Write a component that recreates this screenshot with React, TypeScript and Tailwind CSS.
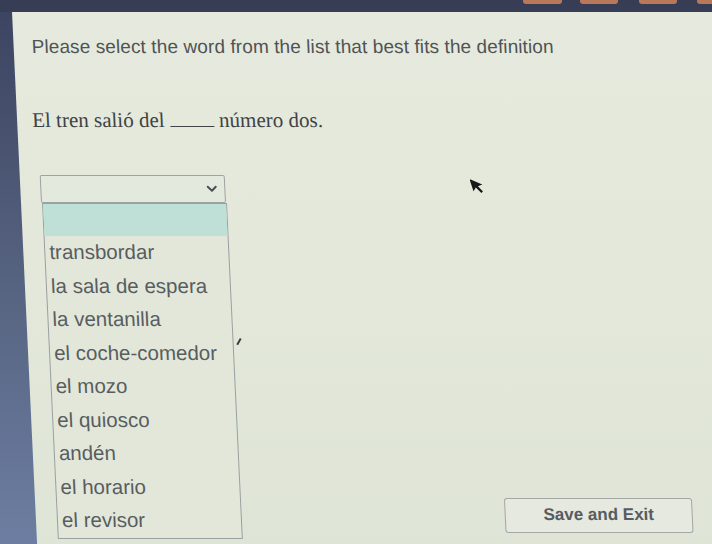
import React from "react";

const options = [
  "transbordar",
  "la sala de espera",
  "la ventanilla",
  "el coche-comedor",
  "el mozo",
  "el quiosco",
  "andén",
  "el horario",
  "el revisor",
];

function Chevron() {
  return (
    <svg width="11" height="8" viewBox="0 0 11 8" fill="none">
      <path d="M1.5 1.8 L5.5 5.8 L9.5 1.8" stroke="#4a4f55" strokeWidth="2" strokeLinecap="round" strokeLinejoin="round" />
    </svg>
  );
}

export default function App() {
  return (
    <div className="relative w-[712px] h-[544px] overflow-hidden flex flex-col bg-gradient-to-b from-[#3b4360] via-[#55627f] to-[#6d7ea2]">
      {/* top frame */}
      <div className="h-[12px] shrink-0 bg-[#363d54] flex items-start">
        <div className="flex-1" />
        <div className="w-[39px] h-[4px] rounded-b-[3px] bg-[#b9785a]" />
        <div className="w-[38px] h-[4px] rounded-b-[3px] bg-[#b9785a] ml-[18px]" />
        <div className="w-[38px] h-[4px] rounded-b-[3px] bg-[#b9785a] ml-[21px]" />
        <div className="w-[15px] h-[4px] rounded-bl-[3px] bg-[#b9785a] ml-[20px]" />
      </div>

      {/* page panel (photographed at a slight angle) */}
      <div className="flex-1 ml-[12px] w-[740px] origin-top-left skew-x-[2.7deg] bg-gradient-to-b from-[#e6eade] via-[#e3e8da] to-[#dfe5d6] flex flex-col">
        <div
          className="mt-[24px] ml-[18px] leading-[22px] text-[19px] tracking-[0.1px] text-[#4f5456] whitespace-nowrap"
          style={{ fontFamily: '"Liberation Sans", Arial, sans-serif' }}
        >
          Please select the word from the list that best fits the definition
        </div>

        <div
          className="mt-[51px] ml-[15px] leading-[22px] text-[21px] text-[#404345] whitespace-nowrap"
          style={{ fontFamily: '"Liberation Serif", "Times New Roman", serif' }}
        >
          El tren salió del{" "}
          <span className="inline-block w-[44px] border-b border-[#404345] align-baseline" />{" "}
          número dos.
        </div>

        <div className="flex items-end mt-[44px]">
          <div className="flex flex-col">
            <div className="ml-[20px] w-[185px] h-[28px] border border-[#9ea3a3] rounded-[2px] bg-[#e4e9dd] flex items-center justify-end pr-[7px]">
              <Chevron />
            </div>
            <div
              className="ml-[21px] w-[185px] border border-[#9aa0a2] bg-[#e2e7da] flex flex-col text-[20.5px] text-[#585d60]"
              style={{ fontFamily: '"Liberation Sans", Arial, sans-serif' }}
            >
              <div className="h-[32px] bg-[#bfe0d6]" />
              {options.map((o) => (
                <div key={o} className="h-[33.5px] flex items-center pl-[4px] whitespace-nowrap">
                  {o}
                </div>
              ))}
            </div>
          </div>
          <div
            className="ml-[263px] mb-[6px] w-[188px] h-[35px] border border-[#a3a8a4] rounded-[3px] bg-[#e5e9df] flex items-center justify-center text-[17px] font-bold text-[#585c61]"
            style={{ fontFamily: '"Liberation Sans", Arial, sans-serif' }}
          >
            Save and Exit
          </div>
        </div>
      </div>

      {/* photo speck */}
      <div className="absolute left-[238px] top-[338px] w-[1.5px] h-[7px] bg-[#3a3d40] rotate-[30deg]" />
      {/* mouse cursor */}
      <svg className="absolute left-[470px] top-[176px]" width="16" height="24" viewBox="0 0 16 24">
        <path d="M2 1 L2 14 L5.5 11 L9 18 L11 17 L7.8 10.5 L12.5 10.2 Z" fill="#151719" transform="rotate(-18 7 10)" />
      </svg>
    </div>
  );
}
